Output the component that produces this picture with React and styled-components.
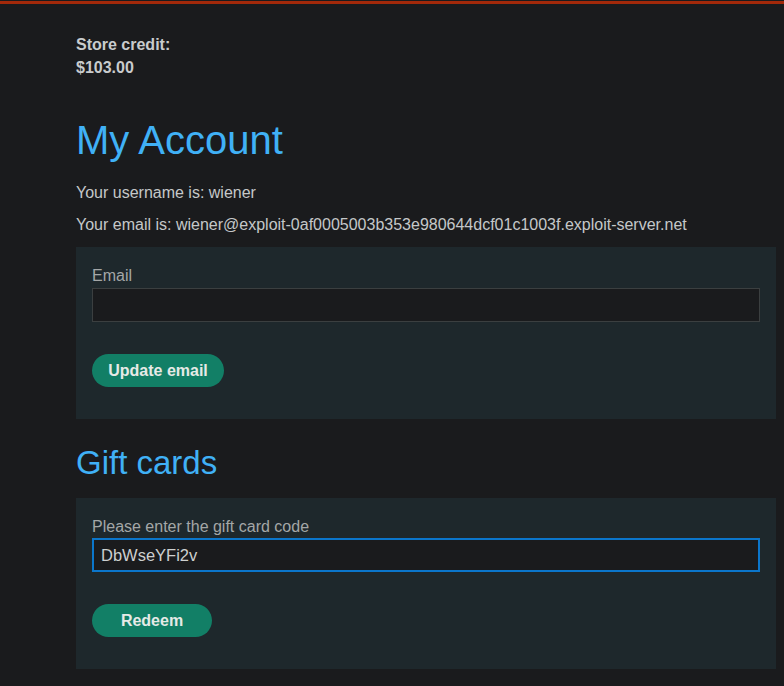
import React from 'react'
import styled, { createGlobalStyle } from 'styled-components'

const GlobalStyle = createGlobalStyle`
    html, body {
        margin: 0;
        padding: 0;
        background-color: #1a1b1d;
    }
    body {
        font-family: "Liberation Sans", Arial, sans-serif;
        font-size: 16px;
        color: #c5c8c9;
    }
`

const TopBar = styled.div`
    margin-top: 1px;
    height: 3px;
    background-color: #a3290a;
`

const Page = styled.main`
    padding: 29px 8px 20px 76px;
`

const Credit = styled.p`
    margin: 0;
    font-weight: bold;
    line-height: 23px;
    color: #c9cccd;
`

const Heading = styled.h1`
    margin: ${p => p.small ? '24px' : '37px'} 0 0;
    font-weight: normal;
    font-size: ${p => p.small ? '33px' : '40px'};
    line-height: ${p => p.small ? '40px' : '48px'};
    color: #40b1f6;
`

const Info = styled.p`
    margin: ${p => p.first ? '20px' : '14px'} 0 0;
    line-height: 18px;
`

const Panel = styled.form`
    margin-top: ${p => p.tight ? '15px' : '13px'};
    background-color: #1e282c;
    padding: 20px 16px 32px;
    display: flex;
    flex-direction: column;
`

const Label = styled.label`
    color: #a4a7a7;
    line-height: 18px;
`

const Input = styled.input`
    box-sizing: border-box;
    margin-top: ${p => p.focused ? '2px' : '3px'};
    height: 34px;
    width: 100%;
    padding: 0 7px;
    background-color: #1a1b1d;
    border: ${p => p.focused ? '2px solid #0b76cb' : '1px solid #3b3f40'};
    color: #cdd0d0;
    font-family: "Liberation Sans", Arial, sans-serif;
    font-size: 16.5px;
    outline: none;
`

const Button = styled.button`
    align-self: flex-start;
    margin-top: 32px;
    height: 33px;
    width: ${p => p.w}px;
    border: none;
    border-radius: 17px;
    background-color: #127f66;
    color: #e6eae6;
    font-family: "Liberation Sans", Arial, sans-serif;
    font-weight: bold;
    font-size: 16px;
    cursor: pointer;
`

export default function App() {
    return (
        <>
            <GlobalStyle />
            <TopBar />
            <Page>
                <Credit>Store credit:</Credit>
                <Credit>$103.00</Credit>
                <Heading>My Account</Heading>
                <Info first>Your username is: wiener</Info>
                <Info>Your email is: wiener@exploit-0af0005003b353e980644dcf01c1003f.exploit-server.net</Info>
                <Panel onSubmit={e => e.preventDefault()}>
                    <Label>Email</Label>
                    <Input type="email" />
                    <Button w={132}>Update email</Button>
                </Panel>
                <Heading small>Gift cards</Heading>
                <Panel tight onSubmit={e => e.preventDefault()}>
                    <Label>Please enter the gift card code</Label>
                    <Input focused defaultValue="DbWseYFi2v" />
                    <Button w={120}>Redeem</Button>
                </Panel>
            </Page>
        </>
    )
}
